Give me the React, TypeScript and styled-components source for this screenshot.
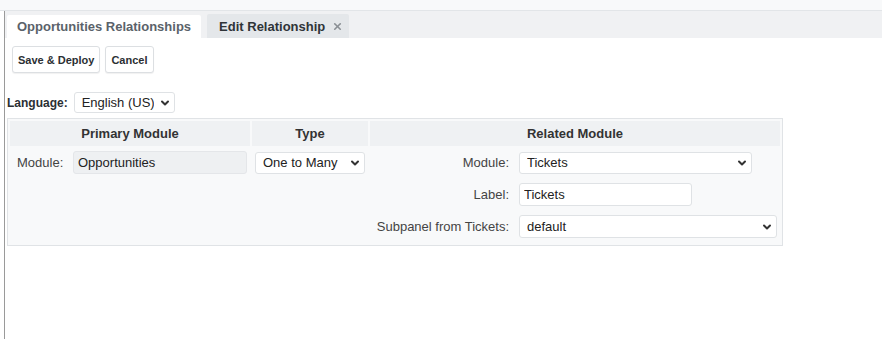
import React from "react";
import styled, { createGlobalStyle } from "styled-components";
import { ChevronDown, X } from "lucide-react";

const GlobalStyle = createGlobalStyle`
  html, body {
    margin: 0;
    padding: 0;
    background: #ffffff;
    font-family: "Liberation Sans", Arial, sans-serif;
    color: #333;
  }
`;

const Page = styled.div`
  height: 339px;
  display: flex;
  flex-direction: column;
`;

const TopBand = styled.div`
  height: 10px;
  background: #f8f9fa;
  border-bottom: 1px solid #e2e5e8;
`;

const Main = styled.div`
  flex: 1;
  margin-left: 4px;
  border-left: 1px solid #9a9a9a;
`;

const TabStrip = styled.div`
  height: 27px;
  background: #f0f1f3;
  display: flex;
  align-items: flex-end;
  gap: 6px;
  padding-left: 2px;
`;

const Tab = styled.div<{ $active?: boolean }>`
  height: ${(p) => (p.$active ? "23px" : "24px")};
  box-sizing: border-box;
  display: flex;
  align-items: center;
  gap: 7px;
  padding: ${(p) => (p.$active ? "0 10px" : "0 6px 0 12px")};
  background: ${(p) => (p.$active ? "#ffffff" : "#e4e7ea")};
  color: ${(p) => (p.$active ? "#5a626a" : "#2f3438")};
  font-size: 13px;
  font-weight: bold;
  border-radius: 2px 2px 0 0;
  white-space: nowrap;
`;

const Content = styled.div`
  padding: 8px 0 0 2px;
`;

const Toolbar = styled.div`
  display: flex;
  gap: 5px;
  margin-left: 5px;
`;

const Button = styled.button`
  height: 27px;
  box-sizing: border-box;
  padding: 0 5px;
  background: #ffffff;
  border: 1px solid #dcdfe2;
  border-radius: 3px;
  box-shadow: 0 1px 1px rgba(0, 0, 0, 0.06);
  font-family: "Liberation Sans", Arial, sans-serif;
  font-size: 11px;
  font-weight: bold;
  color: #2b2f33;
`;

const LanguageRow = styled.div`
  display: flex;
  align-items: center;
  gap: 6px;
  margin-top: 19px;
`;

const LanguageLabel = styled.span`
  font-size: 12px;
  font-weight: bold;
  color: #2b2f33;
`;

const SelectWrap = styled.div<{ $w: number; $h?: number }>`
  position: relative;
  width: ${(p) => p.$w}px;
  height: ${(p) => p.$h ?? 23}px;
  flex: none;
`;

const Select = styled.select`
  appearance: none;
  width: 100%;
  height: 100%;
  box-sizing: border-box;
  padding: 0 20px 0 7px;
  background: #ffffff;
  border: 1px solid #dfe2e5;
  border-radius: 3px;
  font-family: "Liberation Sans", Arial, sans-serif;
  font-size: 13px;
  color: #222;
  outline: none;
`;

const Chevron = styled.span`
  position: absolute;
  right: 4px;
  top: 50%;
  transform: translateY(-50%);
  display: flex;
  pointer-events: none;
  color: #333;
`;

const Input = styled.input<{ $w: number; $readOnly?: boolean }>`
  width: ${(p) => p.$w}px;
  height: 23px;
  box-sizing: border-box;
  padding: 0 4px;
  background: ${(p) => (p.$readOnly ? "#eef0f2" : "#ffffff")};
  border: 1px solid ${(p) => (p.$readOnly ? "#e4e6e9" : "#dfe2e5")};
  border-radius: 3px;
  font-family: "Liberation Sans", Arial, sans-serif;
  font-size: 13px;
  color: #222;
  outline: none;
`;

const Panel = styled.div`
  margin-top: 5px;
  width: 776px;
  box-sizing: border-box;
  border: 1px solid #e0e3e6;
  background: #f8f9fa;
  padding: 2px 2px 1px;
  display: grid;
  grid-template-columns: 60px 178px 116px 142px 266px;
  column-gap: 2px;
`;

const HeaderCell = styled.div<{ $span?: number }>`
  grid-column: span ${(p) => p.$span ?? 1};
  height: 25px;
  margin-bottom: 2px;
  display: flex;
  align-items: center;
  justify-content: center;
  background: #eff1f3;
  font-size: 13px;
  font-weight: bold;
  color: #333;
`;

const Cell = styled.div<{ $align?: "left" | "right"; $pad?: number }>`
  display: flex;
  align-items: center;
  justify-content: ${(p) => (p.$align === "right" ? "flex-end" : "flex-start")};
  padding: 3px 0 6px;
  padding-left: ${(p) => (p.$align === "right" ? 0 : p.$pad ?? 0)}px;
  padding-right: ${(p) => (p.$align === "right" ? p.$pad ?? 0 : 0)}px;
  font-size: 13px;
  color: #444;
  white-space: nowrap;
`;

function Dropdown({ value, width, height }: { value: string; width: number; height?: number }) {
  return (
    <SelectWrap $w={width} $h={height}>
      <Select defaultValue={value}>
        <option>{value}</option>
      </Select>
      <Chevron>
        <ChevronDown size={12} strokeWidth={4} />
      </Chevron>
    </SelectWrap>
  );
}

export default function App() {
  return (
    <>
      <GlobalStyle />
      <Page>
        <TopBand />
        <Main>
          <TabStrip>
            <Tab $active>Opportunities Relationships</Tab>
            <Tab>
              Edit Relationship
              <X size={11} strokeWidth={3.5} color="#8a8f94" />
            </Tab>
          </TabStrip>
          <Content>
            <Toolbar>
              <Button>Save &amp; Deploy</Button>
              <Button>Cancel</Button>
            </Toolbar>
            <LanguageRow>
              <LanguageLabel>Language:</LanguageLabel>
              <Dropdown value="English (US)" width={101} height={21} />
            </LanguageRow>
            <Panel>
              <HeaderCell $span={2}>Primary Module</HeaderCell>
              <HeaderCell>Type</HeaderCell>
              <HeaderCell $span={2}>Related Module</HeaderCell>

              <Cell $pad={7}>Module:</Cell>
              <Cell $pad={1}>
                <Input $w={174} $readOnly readOnly defaultValue="Opportunities" />
              </Cell>
              <Cell $pad={3}>
                <Dropdown value="One to Many" width={110} height={22} />
              </Cell>
              <Cell $align="right" $pad={3}>Module:</Cell>
              <Cell $pad={5}>
                <Dropdown value="Tickets" width={233} height={22} />
              </Cell>

              <Cell />
              <Cell />
              <Cell />
              <Cell $align="right" $pad={3}>Label:</Cell>
              <Cell $pad={5}>
                <Input $w={173} defaultValue="Tickets" />
              </Cell>

              <Cell />
              <Cell />
              <Cell />
              <Cell $align="right" $pad={3}>Subpanel from Tickets:</Cell>
              <Cell $pad={5}>
                <Dropdown value="default" width={258} />
              </Cell>
            </Panel>
          </Content>
        </Main>
      </Page>
    </>
  );
}
